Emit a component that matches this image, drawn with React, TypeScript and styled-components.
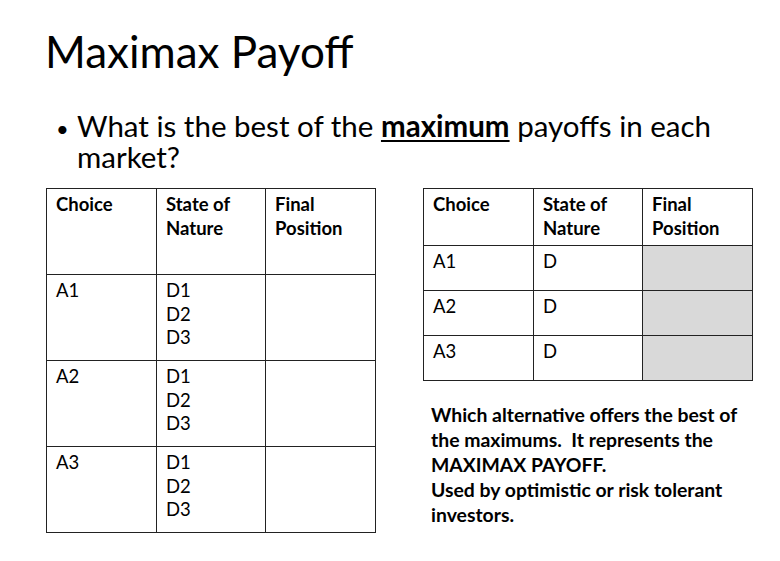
import { createGlobalStyle, styled } from "styled-components";

const GlobalStyle = createGlobalStyle`
  html, body {
    margin: 0;
    padding: 0;
    background: #ffffff;
  }
  body {
    font-family: Lato, "Open Sans", sans-serif;
    color: #000000;
  }
`;

type Row = { choice: string; states: string[] };

const leftRows: Row[] = [
  { choice: "A1", states: ["D1", "D2", "D3"] },
  { choice: "A2", states: ["D1", "D2", "D3"] },
  { choice: "A3", states: ["D1", "D2", "D3"] },
];

const rightRows: Row[] = [
  { choice: "A1", states: ["D"] },
  { choice: "A2", states: ["D"] },
  { choice: "A3", states: ["D"] },
];

const PayoffTable = ({
  rows,
  headH,
  rowH,
  shaded,
}: {
  rows: Row[];
  headH: number;
  rowH: number;
  shaded?: boolean;
}) => (
  <Table>
    <colgroup>
      <col style={{ width: 110 }} />
      <col style={{ width: 109 }} />
      <col style={{ width: 110 }} />
    </colgroup>
    <thead>
      <tr style={{ height: headH }}>
        <HeadCell>Choice</HeadCell>
        <HeadCell>
          State of
          <br />
          Nature
        </HeadCell>
        <HeadCell>
          Final
          <br />
          Position
        </HeadCell>
      </tr>
    </thead>
    <tbody>
      {rows.map((r) => (
        <tr key={r.choice} style={{ height: rowH }}>
          <Cell>{r.choice}</Cell>
          <Cell>
            {r.states.map((s) => (
              <div key={s}>{s}</div>
            ))}
          </Cell>
          <Cell $shaded={shaded} />
        </tr>
      ))}
    </tbody>
  </Table>
);

export default function App() {
  return (
    <>
      <GlobalStyle />
      <Slide>
        <Title>Maximax Payoff</Title>
        <Bullet>
          <Dot>•</Dot>
          <BulletText>
            What is the best of the <Strong>maximum</Strong> payoffs in each
            market?
          </BulletText>
        </Bullet>
        <Content>
          <PayoffTable rows={leftRows} headH={86} rowH={86} />
          <RightColumn>
            <PayoffTable rows={rightRows} headH={57} rowH={45} shaded />
            <Note>
              Which alternative offers the best of the maximums.&nbsp; It
              represents the MAXIMAX PAYOFF.
              <br />
              Used by optimistic or risk tolerant investors.
            </Note>
          </RightColumn>
        </Content>
      </Slide>
    </>
  );
}

const Slide = styled.div`
  width: 780px;
  height: 561px;
  box-sizing: border-box;
  padding: 25px 0 0 46px;
  display: flex;
  flex-direction: column;
  overflow: hidden;
`;

const Title = styled.h1`
  margin: 0 0 0 -1px;
  font-size: 44px;
  font-weight: 400;
  line-height: 52px;
`;

const Bullet = styled.div`
  display: flex;
  align-items: baseline;
  margin-top: 33px;
  margin-left: 10px;
  font-size: 29.5px;
  line-height: 31px;
`;

const Dot = styled.span`
  width: 21px;
  flex-shrink: 0;
  font-size: 22px;
`;

const BulletText = styled.p`
  margin: 0;
  width: 660px;
`;

const Strong = styled.span`
  font-weight: 700;
  text-decoration: underline;
  text-decoration-thickness: 2px;
  text-underline-offset: 3px;
`;

const Content = styled.div`
  display: flex;
  gap: 47px;
  margin-top: 16px;
`;

const RightColumn = styled.div`
  display: flex;
  flex-direction: column;
`;

const Table = styled.table`
  border-collapse: collapse;
  table-layout: fixed;
  width: 330px;
  font-size: 18.5px;
  line-height: 24px;
`;

const HeadCell = styled.th`
  border: 1px solid #222222;
  padding: 3px 9px;
  text-align: left;
  vertical-align: top;
  font-weight: 700;
`;

const Cell = styled.td<{ $shaded?: boolean }>`
  border: 1px solid #222222;
  padding: 4px 9px 3px;
  vertical-align: top;
  line-height: 23.5px;
  background: ${(p) => (p.$shaded ? "#d9d9d9" : "transparent")};
`;

const Note = styled.p`
  margin: 21px 0 0 8px;
  width: 318px;
  font-size: 19.4px;
  font-weight: 700;
  line-height: 25px;
`;
